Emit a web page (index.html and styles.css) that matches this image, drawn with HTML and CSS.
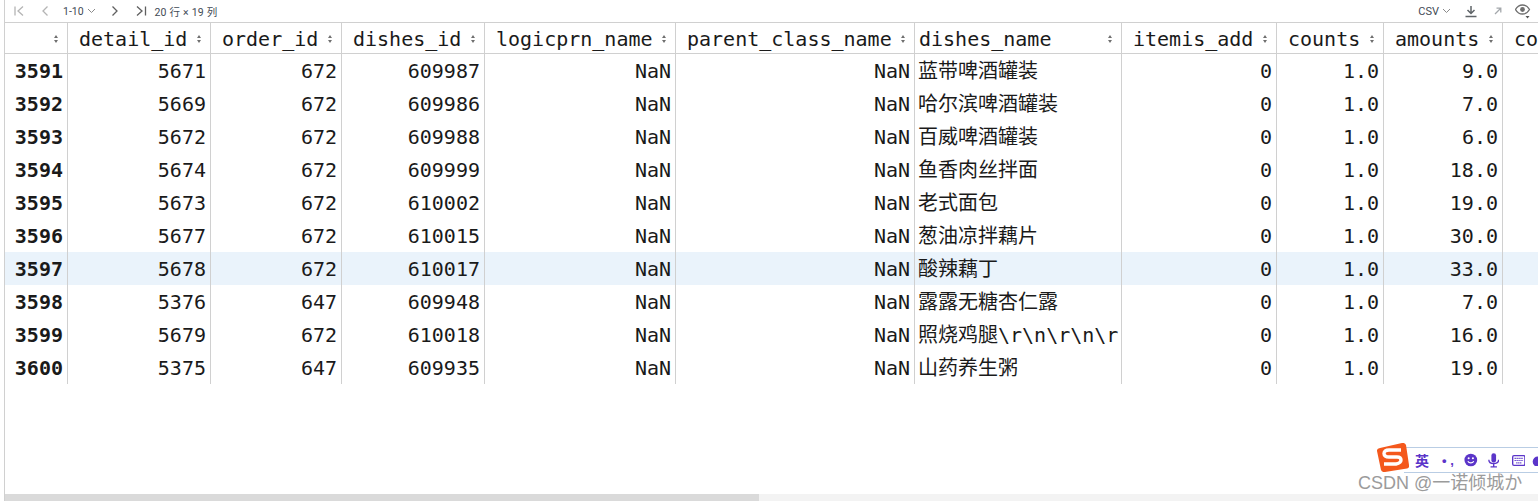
FILE: index.html
```html
<!DOCTYPE html>
<html lang="zh-CN">
<head>
  <meta charset="UTF-8" />
  <title>DataFrame</title>
  <link rel="stylesheet" href="styles.css">
</head>
<body>

  <div id="pagina">
    <div id="barra">
      <div class="grupo-pag">
        <svg class="ico ico-primeiro" width="12" height="12" viewBox="0 0 12 12"><path d="M2 1.500v9M10 1.500 5 6l5 4.500"/></svg>
        <svg class="ico ico-anterior" width="8" height="12" viewBox="0 0 8 12"><path d="M6.500 1.500 2 6l4.500 4.500"/></svg>
        <span class="intervalo">1-10</span>
        <svg class="seta-baixo" width="9" height="6" viewBox="0 0 9 6"><path d="M1 1l3.500 3.500L8 1"/></svg>
        <svg class="ico-escuro ico-proximo" width="8" height="12" viewBox="0 0 8 12"><path d="M1.500 1.500 6 6l-4.500 4.500"/></svg>
        <svg class="ico-escuro ico-ultimo" width="11" height="12" viewBox="0 0 11 12"><path d="M1 1.500 6 6l-5 4.500M9.500 1.500v9"/></svg>
        <span class="resumo">20 行 × 19 列</span>
      </div>
      <div class="grupo-acoes">
        <span class="formato">CSV</span>
        <svg class="seta-baixo" width="9" height="6" viewBox="0 0 9 6"><path d="M1 1l3.500 3.500L8 1"/></svg>
        <svg class="ico-baixar" width="12" height="13" viewBox="0 0 12 13"><path d="M6 1v7M2.500 5 6 8.500 9.500 5M.5 11.500h11"/></svg>
        <svg class="ico-abrir" width="8" height="8" viewBox="0 0 8 8"><path d="M1 7 6.500 1.500M2.500 1.200h4.300v4.300"/></svg>
        <svg class="ico-olho" width="16" height="16" viewBox="0 0 16 16"><path class="contorno" d="M.5 6.500C2.500 3 5 2 7.500 2s5 1 7 4.500c-2 3.500-4.500 4.500-7 4.500s-5-1-7-4.500z"/><circle class="pupila" cx="7.500" cy="6.500" r="2.400"/><path class="tri" d="M10.500 13h4l-2 2.500z"/></svg>
      </div>
    </div>

    <div id="grade">
      <table id="tabela">
        <colgroup>
          <col class="c-idx"><col class="c-143"><col class="c-131"><col class="c-143"><col class="c-191"><col class="c-239"><col class="c-207"><col class="c-155"><col class="c-107"><col class="c-119"><col class="c-120">
        </colgroup>
        <thead>
          <tr>
            <th><div class="cab"><span></span><i class="ordem"></i></div></th>
            <th><div class="cab"><span>detail_id</span><i class="ordem"></i></div></th>
            <th><div class="cab"><span>order_id</span><i class="ordem"></i></div></th>
            <th><div class="cab"><span>dishes_id</span><i class="ordem"></i></div></th>
            <th><div class="cab"><span>logicprn_name</span><i class="ordem"></i></div></th>
            <th><div class="cab"><span>parent_class_name</span><i class="ordem"></i></div></th>
            <th class="th-txt"><div class="cab"><span>dishes_name</span><i class="ordem"></i></div></th>
            <th><div class="cab"><span>itemis_add</span><i class="ordem"></i></div></th>
            <th><div class="cab"><span>counts</span><i class="ordem"></i></div></th>
            <th><div class="cab"><span>amounts</span><i class="ordem"></i></div></th>
            <th><div class="cab"><span>cost</span><i class="ordem"></i></div></th>
          </tr>
        </thead>
        <tbody>
          <tr><td class="idx">3591</td><td>5671</td><td>672</td><td>609987</td><td>NaN</td><td>NaN</td><td class="txt">蓝带啤酒罐装</td><td>0</td><td>1.0</td><td>9.0</td><td></td></tr>
          <tr><td class="idx">3592</td><td>5669</td><td>672</td><td>609986</td><td>NaN</td><td>NaN</td><td class="txt">哈尔滨啤酒罐装</td><td>0</td><td>1.0</td><td>7.0</td><td></td></tr>
          <tr><td class="idx">3593</td><td>5672</td><td>672</td><td>609988</td><td>NaN</td><td>NaN</td><td class="txt">百威啤酒罐装</td><td>0</td><td>1.0</td><td>6.0</td><td></td></tr>
          <tr><td class="idx">3594</td><td>5674</td><td>672</td><td>609999</td><td>NaN</td><td>NaN</td><td class="txt">鱼香肉丝拌面</td><td>0</td><td>1.0</td><td>18.0</td><td></td></tr>
          <tr><td class="idx">3595</td><td>5673</td><td>672</td><td>610002</td><td>NaN</td><td>NaN</td><td class="txt">老式面包</td><td>0</td><td>1.0</td><td>19.0</td><td></td></tr>
          <tr><td class="idx">3596</td><td>5677</td><td>672</td><td>610015</td><td>NaN</td><td>NaN</td><td class="txt">葱油凉拌藕片</td><td>0</td><td>1.0</td><td>30.0</td><td></td></tr>
          <tr class="marcada"><td class="idx">3597</td><td>5678</td><td>672</td><td>610017</td><td>NaN</td><td>NaN</td><td class="txt">酸辣藕丁</td><td>0</td><td>1.0</td><td>33.0</td><td></td></tr>
          <tr><td class="idx">3598</td><td>5376</td><td>647</td><td>609948</td><td>NaN</td><td>NaN</td><td class="txt">露露无糖杏仁露</td><td>0</td><td>1.0</td><td>7.0</td><td></td></tr>
          <tr><td class="idx">3599</td><td>5679</td><td>672</td><td>610018</td><td>NaN</td><td>NaN</td><td class="txt">照烧鸡腿\r\n\r\n\r</td><td>0</td><td>1.0</td><td>16.0</td><td></td></tr>
          <tr><td class="idx">3600</td><td>5375</td><td>647</td><td>609935</td><td>NaN</td><td>NaN</td><td class="txt">山药养生粥</td><td>0</td><td>1.0</td><td>19.0</td><td></td></tr>
        </tbody>
      </table>
    </div>

    <div id="rolagem"><div id="polegar"></div></div>
  </div>

  <!-- barra do IME por cima da pagina -->
  <div id="ime">
    <span class="ime-zi">英</span>
    <span class="ime-pontos">• ,</span>
    <svg class="ime-rosto" width="16" height="16" viewBox="0 0 16 16"><circle cx="8" cy="8" r="7.500" fill="#5b35c9"/><circle cx="5.500" cy="6" r="1.200" fill="#fff"/><circle cx="10.500" cy="6" r="1.200" fill="#fff"/><path d="M4.500 9.500c1.500 2.500 5.500 2.500 7 0" fill="none" stroke="#fff" stroke-width="1.400"/></svg>
    <svg class="ime-mic" width="13" height="17" viewBox="0 0 13 17"><rect x="4" y="0" width="5.500" height="11" rx="2.700" fill="#5b35c9"/><path d="M1 7.500c0 6 11.500 6 11.500 0M6.700 12v3.500M3 16h7.500" fill="none" stroke="#5b35c9" stroke-width="1.600"/></svg>
    <svg class="ime-teclado" width="16" height="13" viewBox="0 0 16 13"><rect x=".8" y=".8" width="14.400" height="11.400" rx="1.500" fill="none" stroke="#5b35c9" stroke-width="1.600"/><path d="M3 4h10M3 6.500h10M5 9.200h6" fill="none" stroke="#5b35c9" stroke-width="1.400" stroke-dasharray="1.500 .8"/></svg>
    <svg class="ime-fim" width="8" height="12" viewBox="0 0 8 12"><circle cx="8" cy="8" r="6" fill="#5b35c9"/></svg>
  </div>
  <div id="logo-ime">
    <svg width="32" height="29" viewBox="0 0 32 29"><path d="M3 5 25 0q3-.5 4 2l3 20q.5 3-2 3.500L8 29q-3 .5-4-2L0 8q-.5-2.500 3-3z" fill="#f4581c"/><path d="M24 7H12q-5 0-5 3.500T12 14h8q4 0 4 3t-5 4H7" fill="none" stroke="#fff" stroke-width="3.400"/></svg>
  </div>
  <div id="marca">CSDN @一诺倾城か</div>

</body>
</html>
```

FILE: styles.css
```css
* { margin: 0; padding: 0; box-sizing: border-box; }

body {
  font-family: "DejaVu Sans Mono", "Noto Sans CJK SC", monospace;
  background-color: #fff;
  color: #1a1a1a;
  height: 501px;
  overflow: hidden;
}

#pagina {
  height: 501px;
  margin-left: 4px;
  border-left: 1px solid #d0d0d0;
  display: flex;
  flex-direction: column;
}

#barra {
  height: 22px;
  flex: none;
  display: flex;
  justify-content: space-between;
  align-items: center;
  font-family: Roboto, "Noto Sans CJK SC", sans-serif;
  font-size: 10px;
  color: #3f4a55;
}

.grupo-pag, .grupo-acoes { display: flex; align-items: center; }
.grupo-pag { padding-left: 8px; }
.grupo-acoes { padding-right: 7px; }

.ico path, .ico-escuro path, .seta-baixo path,
.ico-baixar path, .ico-abrir path { fill: none; }

.ico path { stroke: #b4b4b4; stroke-width: 1.300; }
.ico-escuro path { stroke: #5f5f5f; stroke-width: 1.300; }
.seta-baixo path { stroke: #8a8a8a; stroke-width: 1; }

.ico-anterior { margin-left: 16px; }
.intervalo { margin-left: 14px; font-size: 10.500px; }
.seta-baixo { margin-left: 3px; }
.ico-proximo { margin-left: 15px; }
.ico-ultimo { margin-left: 17px; }
.resumo { margin-left: 8px; font-size: 10.500px; word-spacing: .5px; }

.formato { font-size: 11px; }
.ico-baixar { margin-left: 14px; }
.ico-baixar path { stroke: #5f6468; stroke-width: 1.500; }
.ico-abrir { margin-left: 17px; }
.ico-abrir path { stroke: #a4a8ac; stroke-width: 1.300; }
.ico-olho { margin-left: 13px; }
.ico-olho .contorno { fill: none; stroke: #6e6e6e; stroke-width: 1.300; }
.ico-olho .pupila { fill: #6e6e6e; }
.ico-olho .tri { fill: #555; }

#grade {
  flex: 1;
  min-height: 0;
  overflow: hidden;
}

#tabela {
  table-layout: fixed;
  width: 1617px;
  border-collapse: separate;
  border-spacing: 0;
  font-size: 20px;
}

.c-idx { width: 63px; }
.c-143 { width: 143px; }
.c-131 { width: 131px; }
.c-191 { width: 191px; }
.c-239 { width: 239px; }
.c-207 { width: 207px; }
.c-155 { width: 155px; }
.c-107 { width: 107px; }
.c-119 { width: 119px; }
.c-120 { width: 120px; }

th {
  height: 32px;
  font-weight: normal;
  text-align: left;
  border-top: 1px solid #d0d0d0;
  border-bottom: 1px solid #d0d0d0;
  border-right: 1px solid #d0d0d0;
  padding: 1px 7px 0 11px;
}

.th-txt { padding-left: 4px; }

.cab {
  display: flex;
  justify-content: space-between;
  align-items: center;
  white-space: nowrap;
}

/* duas setinhas de ordenacao */
.ordem {
  width: 7px;
  height: 8px;
  flex: none;
  position: relative;
}
.ordem::before, .ordem::after {
  content: "";
  position: absolute;
  left: 1px;
  border-left: 2.500px solid transparent;
  border-right: 2.500px solid transparent;
}
.ordem::before { top: 0; border-bottom: 3px solid #6f6f6f; }
.ordem::after { bottom: 0; border-top: 3px solid #6f6f6f; }

td {
  height: 33px;
  padding: 1px 4px 0 4px;
  text-align: right;
  border-right: 1px solid #d0d0d0;
  white-space: nowrap;
  overflow: hidden;
  line-height: 32px;
}

td.idx { font-weight: bold; }
td.txt { text-align: left; padding-left: 3px; }
.marcada td { background-color: #eaf3fb; }

#rolagem {
  height: 7px;
  flex: none;
  background-color: #f3f3f3;
}

#polegar {
  width: 754px;
  height: 7px;
  background-color: #dadada;
}

#ime {
  position: absolute;
  left: 1404px;
  top: 447px;
  width: 134px;
  height: 26px;
  background-color: #fff;
  border-top: 1px solid #b9cde4;
  border-bottom: 1px solid #b9cde4;
  display: flex;
  align-items: center;
  padding-left: 11px;
  overflow: hidden;
}

.ime-zi {
  font-family: "Noto Sans CJK SC", sans-serif;
  font-size: 14px;
  font-weight: bold;
  color: #5b35c9;
}

.ime-pontos {
  width: 20px;
  margin-left: 13px;
  font-family: "Liberation Sans", sans-serif;
  font-size: 13px;
  font-weight: bold;
  color: #5b35c9;
}

.ime-rosto { margin-left: 5px; }
.ime-mic { margin-left: 10px; }
.ime-teclado { margin-left: 13px; }
.ime-fim { margin-left: 6px; }

#logo-ime {
  position: absolute;
  left: 1377px;
  top: 443px;
  line-height: 0;
}

#marca {
  position: absolute;
  left: 1358px;
  top: 472px;
  font-family: "Liberation Sans", "Noto Sans CJK SC", sans-serif;
  font-size: 18px;
  line-height: 22px;
  color: #9b9b9b;
  white-space: nowrap;
}
```
